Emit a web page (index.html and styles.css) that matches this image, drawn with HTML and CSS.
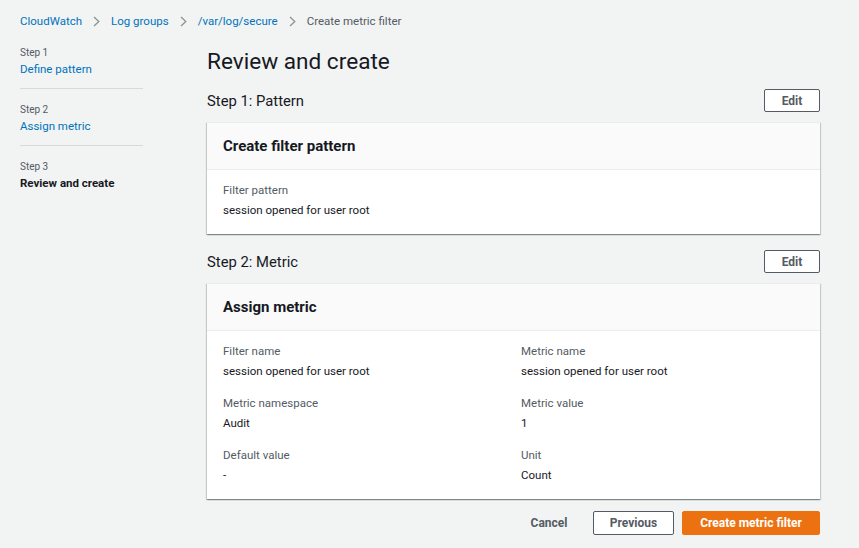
FILE: index.html
```html
<!DOCTYPE html>
<html lang="en">
<head>
<meta charset="utf-8">
<title>Create metric filter</title>
<link rel="stylesheet" href="styles.css">
</head>
<body>
<nav class="crumbs">
  <a class="crumb-link" href="#">CloudWatch</a>
  <svg class="chev" width="7" height="11" viewBox="0 0 7 11"><path d="M1 1 L5.8 5.5 L1 10" fill="none" stroke="#879596" stroke-width="1.3"/></svg>
  <a class="crumb-link" href="#">Log groups</a>
  <svg class="chev" width="7" height="11" viewBox="0 0 7 11"><path d="M1 1 L5.8 5.5 L1 10" fill="none" stroke="#879596" stroke-width="1.3"/></svg>
  <a class="crumb-link" href="#">/var/log/secure</a>
  <svg class="chev" width="7" height="11" viewBox="0 0 7 11"><path d="M1 1 L5.8 5.5 L1 10" fill="none" stroke="#879596" stroke-width="1.3"/></svg>
  <span class="crumb-current">Create metric filter</span>
</nav>
<div class="layout">
  <aside class="steps">
    <div class="step">
      <div class="step-num">Step 1</div>
      <a class="step-name link" href="#">Define pattern</a>
    </div>
    <div class="step">
      <div class="step-num">Step 2</div>
      <a class="step-name link" href="#">Assign metric</a>
    </div>
    <div class="step step-last">
      <div class="step-num">Step 3</div>
      <div class="step-name current">Review and create</div>
    </div>
  </aside>
  <main class="main">
    <h1 class="title">Review and create</h1>

    <div class="section-head">
      <h2 class="section-title">Step 1: Pattern</h2>
      <button class="btn btn-normal btn-edit">Edit</button>
    </div>
    <section class="card">
      <div class="card-head"><h3 class="card-title">Create filter pattern</h3></div>
      <div class="card-body">
        <div class="field">
          <div class="label">Filter pattern</div>
          <div class="value">session opened for user root</div>
        </div>
      </div>
    </section>

    <div class="section-head section-gap">
      <h2 class="section-title">Step 2: Metric</h2>
      <button class="btn btn-normal btn-edit">Edit</button>
    </div>
    <section class="card">
      <div class="card-head"><h3 class="card-title">Assign metric</h3></div>
      <div class="card-body grid">
        <div class="field">
          <div class="label">Filter name</div>
          <div class="value">session opened for user root</div>
        </div>
        <div class="field">
          <div class="label">Metric name</div>
          <div class="value">session opened for user root</div>
        </div>
        <div class="field">
          <div class="label">Metric namespace</div>
          <div class="value">Audit</div>
        </div>
        <div class="field">
          <div class="label">Metric value</div>
          <div class="value">1</div>
        </div>
        <div class="field">
          <div class="label">Default value</div>
          <div class="value">-</div>
        </div>
        <div class="field">
          <div class="label">Unit</div>
          <div class="value">Count</div>
        </div>
      </div>
    </section>

    <div class="actions">
      <button class="btn btn-link">Cancel</button>
      <button class="btn btn-normal btn-prev">Previous</button>
      <button class="btn btn-primary">Create metric filter</button>
    </div>
  </main>
</div>
</body>
</html>
```
FILE: styles.css
```css
* { box-sizing: border-box; }
html, body { margin: 0; padding: 0; }
body {
  background: #f2f3f3;
  font-family: Roboto, "Liberation Sans", Arial, sans-serif;
  color: #16191f;
  font-size: 11.5px;
  height: 548px;
  overflow: hidden;
}
a { text-decoration: none; }

.crumbs {
  display: flex;
  align-items: center;
  padding: 12px 20px 0 20px;
  height: 30px;
  line-height: 18px;
  font-size: 11.5px;
}
.crumb-link { color: #0073bb; }
.crumb-current { color: #545b64; }
.chev { margin: 0 11px 0 11px; display: block; }

.layout {
  display: flex;
  padding: 14px 39px 0 20px;
  gap: 64px;
}
.steps { width: 123px; flex: none; }
.step {
  padding-bottom: 10px;
  border-bottom: 1px solid #d5dbdb;
  margin-bottom: 12px;
}
.step-last { border-bottom: none; }
.step-num {
  font-size: 10px;
  line-height: 15px;
  padding-top: 1px;
  color: #545b64;
}
.step-name {
  display: block;
  line-height: 18px;
  font-size: 11.5px;
}
.link { color: #0073bb; }
.current { font-weight: 700; color: #16191f; }

.main { flex: 1; min-width: 0; padding-top: 4px; }
.title {
  margin: 0;
  font-size: 22.6px;
  line-height: 28px;
  font-weight: 400;
  color: #16191f;
}
.section-head {
  display: flex;
  align-items: center;
  justify-content: space-between;
  margin-top: 13px;
  height: 23px;
}
.section-gap { margin-top: 16px; }
.section-title {
  margin: 0;
  font-size: 14.8px;
  font-weight: 400;
  line-height: 20px;
  color: #16191f;
}

.btn {
  font-family: Roboto, "Liberation Sans", Arial, sans-serif;
  font-size: 12px;
  font-weight: 700;
  border-radius: 2px;
  cursor: pointer;
  padding: 0;
  line-height: 16px;
}
.btn-normal {
  background: #fff;
  color: #545b64;
  border: 1px solid #545b64;
}
.btn-edit { width: 56px; height: 23px; }

.card {
  margin-top: 10px;
  background: #fff;
  border-top: 1px solid #eaeded;
  box-shadow: 0 1px 1px 0 rgba(0,28,36,.3), 1px 1px 1px 0 rgba(0,28,36,.15), -1px 1px 1px 0 rgba(0,28,36,.15);
}
.card-head {
  background: #fafafa;
  border-bottom: 1px solid #eaeded;
  padding: 14px 16px 13px 16px;
}
.card-title {
  margin: 0;
  font-size: 15px;
  font-weight: 700;
  line-height: 19px;
  color: #16191f;
}
.card-body { padding: 12px 16px 16px 16px; }
.grid {
  display: grid;
  grid-template-columns: 1fr 1fr;
  column-gap: 15px;
  row-gap: 16px;
}
.label {
  color: #545b64;
  line-height: 16px;
  font-size: 11.5px;
}
.value {
  margin-top: 4px;
  line-height: 16px;
  font-size: 11.5px;
  color: #16191f;
}

.actions {
  display: flex;
  justify-content: flex-end;
  align-items: center;
  margin-top: 12px;
  gap: 8px;
}
.btn-link {
  background: transparent;
  border: 1px solid transparent;
  color: #545b64;
  height: 24px;
  width: 54px;
  margin-right: 9px;
}
.btn-prev { width: 81px; height: 24px; }
.btn-primary {
  background: #ec7211;
  border: 1px solid #ec7211;
  color: #fff;
  width: 138px;
  height: 24px;
}
```
